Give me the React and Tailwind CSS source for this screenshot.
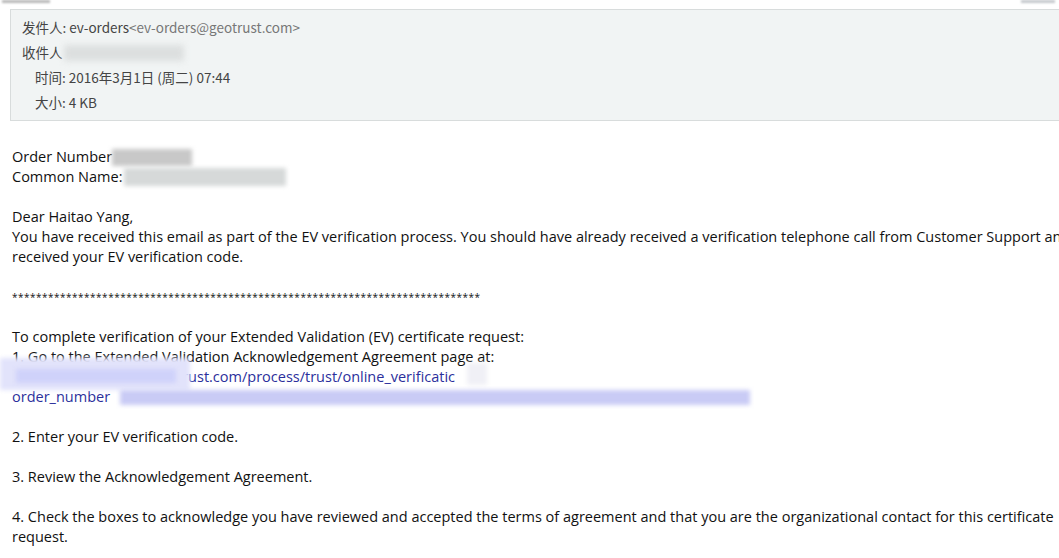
import React from "react";

const body = { fontFamily: '"Open Sans", "Noto Sans", "Noto Sans CJK SC", sans-serif' };
const hdr = { fontFamily: '"Noto Sans CJK SC", "Noto Sans", sans-serif' };

export default function App() {
  const stars = "*".repeat(78);
  return (
    <div className="w-[1059px] h-[558px] overflow-hidden bg-white relative" style={body}>
      <span className="absolute left-[2px] top-[0px] w-[48px] h-[3px] bg-[#b8b8b8] blur-[1px]" />
      <span className="absolute right-[4px] top-[0px] w-[34px] h-[3px] bg-[#c4c8cc] blur-[1px]" />
      <div className="ml-[10px] mt-[9px] border-t border-l border-b border-[#d8dcdc] bg-[#f1f4f4] pt-[5px] pb-[5px] text-[13.5px] text-[#444] flex flex-col" style={hdr}>
        <div className="h-[25px] flex items-center pl-[11px]">
          发件人: ev-orders<span className="text-[#777]">&lt;ev-orders@geotrust.com&gt;</span>
        </div>
        <div className="h-[25px] flex items-center pl-[11px]">
          收件人
          <span className="ml-[1px] inline-block w-[120px] h-[16px] bg-[#dcdfdf] blur-[3px]" />
        </div>
        <div className="h-[25px] flex items-center pl-[24px]">时间: 2016年3月1日 (周二) 07:44</div>
        <div className="h-[25px] flex items-center pl-[24px]">大小: 4 KB</div>
      </div>
      <div className="pl-[12px] pt-[26px] text-[14.5px] leading-[20px] text-[#111] flex flex-col">
        <div className="flex items-center">
          Order Number
          <span className="ml-[0px] inline-block w-[80px] h-[17px] bg-[#c8c8c8] blur-[2px]" />
        </div>
        <div className="flex items-center">
          Common Name:
          <span className="ml-[2px] inline-block w-[162px] h-[18px] bg-[#d6d9d9] blur-[2px]" />
        </div>
        <div className="h-[20px]" />
        <div>Dear Haitao Yang,</div>
        <div className="whitespace-nowrap">
          You have received this email as part of the EV verification process. You should have already received a verification telephone call from Customer Support and
        </div>
        <div>received your EV verification code.</div>
        <div className="h-[20px]" />
        <div className="text-[10px] tracking-[0.5px] whitespace-nowrap">{stars}</div>
        <div className="h-[20px]" />
        <div>To complete verification of your Extended Validation (EV) certificate request:</div>
        <div>1. Go to the Extended Validation Acknowledgement Agreement page at:</div>
        <div className="relative text-[#2b2f9c]">
          <span className="pl-[165px]">trust.com/process/trust/online_verificatic</span>
          <span className="absolute blur-[2px] -left-[12px] top-[-9px] w-[190px] h-[32px] bg-[#e2e3fb]" />
          <span className="absolute blur-[2px] left-[4px] top-[2px] w-[160px] h-[14px] bg-[#cfd2fa]" />
          <span className="absolute blur-[2px] left-[455px] top-[-4px] w-[20px] h-[22px] bg-[#f0f0f6]" />
        </div>
        <div className="flex items-center text-[#2b2f9c]">
          order_number
          <span className="ml-[10px] inline-block w-[630px] h-[15px] bg-[#c9cbf5] blur-[2px]" />
        </div>
        <div className="h-[20px]" />
        <div>2. Enter your EV verification code.</div>
        <div className="h-[20px]" />
        <div>3. Review the Acknowledgement Agreement.</div>
        <div className="h-[20px]" />
        <div className="whitespace-nowrap">
          4. Check the boxes to acknowledge you have reviewed and accepted the terms of agreement and that you are the organizational contact for this certificate
        </div>
        <div>request.</div>
      </div>
    </div>
  );
}
